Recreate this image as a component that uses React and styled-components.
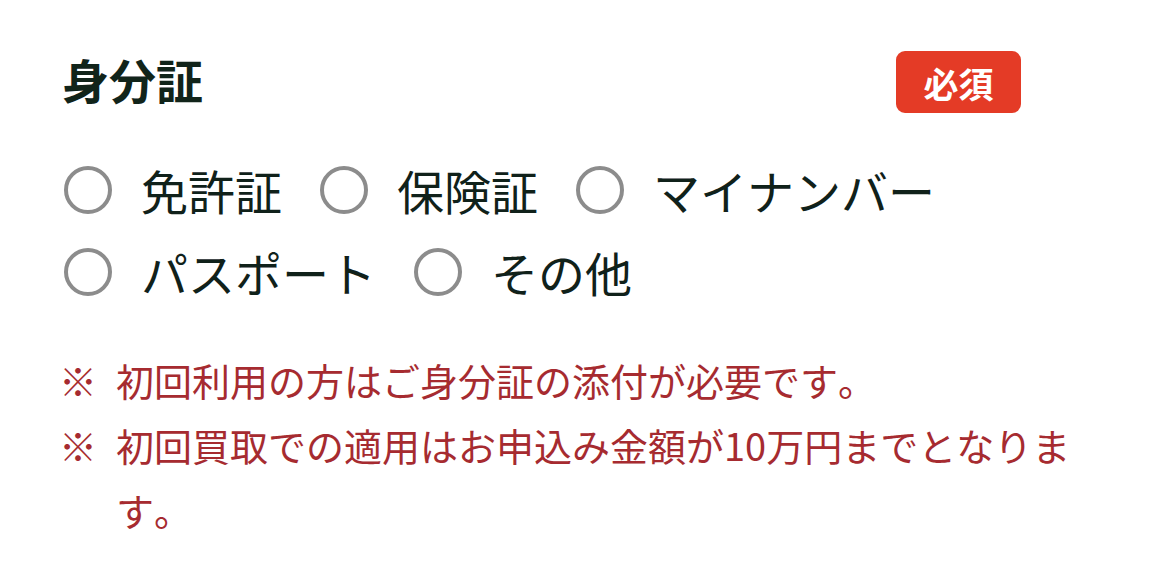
import React from "react";
import styled, { createGlobalStyle } from "styled-components";

const GlobalStyle = createGlobalStyle`
  html, body {
    margin: 0;
    padding: 0;
    background: #ffffff;
  }
  body {
    font-family: "Noto Sans CJK JP", "Noto Sans", sans-serif;
    font-kerning: none;
  }
`;

const Page = styled.div`
  width: 1170px;
  height: 570px;
  box-sizing: border-box;
  padding: 51px 80px 0 62px;
  background: #ffffff;
`;

const Header = styled.div`
  display: flex;
  align-items: center;
  justify-content: space-between;
  width: 959px;
`;

const Title = styled.h2`
  margin: 0;
  padding-bottom: 6px;
  font-size: 47px;
  font-weight: 700;
  line-height: 56px;
  color: #11241a;
`;

const Badge = styled.span`
  display: inline-flex;
  align-items: center;
  justify-content: center;
  width: 125px;
  height: 62px;
  border-radius: 9px;
  background: #e43b26;
  color: #ffffff;
  font-size: 35px;
  font-weight: 700;
`;

const Options = styled.div`
  display: flex;
  flex-wrap: wrap;
  column-gap: 38px;
  row-gap: 34px;
  margin-top: 53px;
  padding-left: 2px;
  width: 1000px;
`;

const Option = styled.label`
  display: inline-flex;
  align-items: center;
  gap: 29px;
  height: 48px;
  cursor: pointer;
`;

const Radio = styled.input.attrs({ type: "radio" })`
  appearance: none;
  -webkit-appearance: none;
  margin: 0;
  width: 48px;
  height: 48px;
  box-sizing: border-box;
  border: 4px solid #8c8c8c;
  border-radius: 50%;
  background: #ffffff;
  flex: none;
`;

const OptionLabel = styled.span`
  font-size: 47px;
  line-height: 48px;
  color: #10211a;
  white-space: nowrap;
`;

const Notes = styled.ul`
  list-style: none;
  margin: 51px 0 0 -3px;
  padding: 0;
  width: 1031px;
`;

const Note = styled.li`
  display: grid;
  grid-template-columns: 57px 1fr;
  font-size: 38px;
  line-height: 65px;
  color: #a62b30;
`;

const Mark = styled.span``;

const options = ["免許証", "保険証", "マイナンバー", "パスポート", "その他"];

const notes = [
  "初回利用の方はご身分証の添付が必要です。",
  "初回買取での適用はお申込み金額が10万円までとなります。",
];

export default function App() {
  return (
    <>
      <GlobalStyle />
      <Page>
        <Header>
          <Title>身分証</Title>
          <Badge>必須</Badge>
        </Header>
        <Options>
          {options.map((o) => (
            <Option key={o}>
              <Radio name="id" value={o} />
              <OptionLabel>{o}</OptionLabel>
            </Option>
          ))}
        </Options>
        <Notes>
          {notes.map((n) => (
            <Note key={n}>
              <Mark>※</Mark>
              <span>{n}</span>
            </Note>
          ))}
        </Notes>
      </Page>
    </>
  );
}
